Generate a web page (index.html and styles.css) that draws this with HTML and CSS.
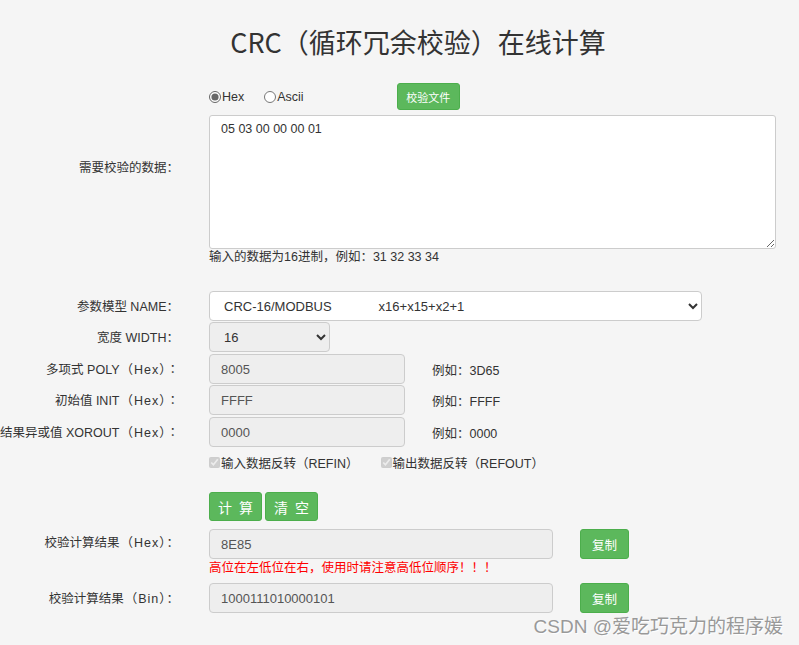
FILE: index.html
```html
<!DOCTYPE html>
<html lang="zh">
<head>
<meta charset="utf-8">
<title>CRC在线计算</title>
<link rel="stylesheet" href="styles.css">
</head>
<body>
<div class="page">
  <h1 class="title">CRC（循环冗余校验）在线计算</h1>

  <div class="row row-radio">
    <div class="label"></div>
    <div class="field radios">
      <label class="radio"><input type="radio" name="fmt" checked>Hex</label>
      <label class="radio radio-ascii"><input type="radio" name="fmt">Ascii</label>
      <button class="btn btn-file">校验文件</button>
    </div>
  </div>

  <div class="row row-data">
    <div class="label label-top">需要校验的数据<span class="colon">：</span></div>
    <div class="field">
      <textarea class="data">05 03 00 00 00 01</textarea>
      <div class="hint">输入的数据为16进制，例如：31 32 33 34</div>
    </div>
  </div>

  <div class="row row-name">
    <div class="label">参数模型 NAME<span class="colon">：</span></div>
    <div class="field">
      <select class="sel sel-name">
        <option>CRC-16/MODBUS&nbsp;&nbsp;&nbsp;&nbsp;&nbsp;&nbsp;&nbsp;&nbsp;&nbsp;&nbsp;&nbsp;&nbsp;&nbsp;x16+x15+x2+1</option>
      </select>
    </div>
  </div>

  <div class="row row-width">
    <div class="label">宽度 WIDTH<span class="colon">：</span></div>
    <div class="field">
      <select class="sel sel-width" disabled>
        <option>16</option>
      </select>
    </div>
  </div>

  <div class="row row-param row-poly">
    <div class="label">多项式 POLY<span class="paren">（Hex）</span><span class="colon">：</span></div>
    <div class="field inline">
      <input class="txt txt-param" type="text" value="8005" disabled>
      <span class="example">例如：3D65</span>
    </div>
  </div>

  <div class="row row-param row-init">
    <div class="label">初始值 INIT<span class="paren">（Hex）</span><span class="colon">：</span></div>
    <div class="field inline">
      <input class="txt txt-param" type="text" value="FFFF" disabled>
      <span class="example">例如：FFFF</span>
    </div>
  </div>

  <div class="row row-param row-xor">
    <div class="label">结果异或值 XOROUT<span class="paren">（Hex）</span><span class="colon">：</span></div>
    <div class="field inline">
      <input class="txt txt-param" type="text" value="0000" disabled>
      <span class="example">例如：0000</span>
    </div>
  </div>

  <div class="row row-check">
    <div class="label"></div>
    <div class="field inline">
      <label class="check"><input type="checkbox" checked disabled>输入数据反转（REFIN）</label>
      <label class="check check-out"><input type="checkbox" checked disabled>输出数据反转（REFOUT）</label>
    </div>
  </div>

  <div class="row row-actions">
    <div class="label"></div>
    <div class="field inline actions">
      <button class="btn btn-big">计 算</button>
      <button class="btn btn-big">清 空</button>
    </div>
  </div>

  <div class="row row-result">
    <div class="label">校验计算结果<span class="paren">（Hex）</span><span class="colon">：</span></div>
    <div class="field">
      <div class="inline">
        <input class="txt txt-result" type="text" value="8E85" readonly>
        <button class="btn btn-copy">复制</button>
      </div>
      <div class="warn">高位在左低位在右，使用时请注意高低位顺序！！！</div>
    </div>
  </div>

  <div class="row row-bin">
    <div class="label">校验计算结果<span class="paren">（Bin）</span><span class="colon">：</span></div>
    <div class="field inline">
      <input class="txt txt-result" type="text" value="1000111010000101" readonly>
      <button class="btn btn-copy">复制</button>
    </div>
  </div>

  <div class="watermark">CSDN @爱吃巧克力的程序媛</div>
</div>
</body>
</html>
```

FILE: styles.css
```css
* { box-sizing: border-box; }

html, body {
  margin: 0;
  padding: 0;
  background: #f5f5f5;
}

body {
  font-family: "Liberation Sans", "Noto Sans CJK SC", sans-serif;
  font-size: 12px;
  color: #333;
}

.page {
  position: relative;
  width: 799px;
  height: 645px;
  overflow: hidden;
}

.title {
  margin: 0;
  padding-top: 22px;
  padding-left: 37px;
  height: 80px;
  line-height: 40px;
  text-align: center;
  font-family: "Noto Sans CJK SC", "Liberation Sans", sans-serif;
  font-weight: 400;
  font-size: 27px;
  color: #333;
}

.row {
  display: grid;
  grid-template-columns: 179px 1fr;
  column-gap: 30px;
  align-items: center;
}

.label {
  text-align: right;
  white-space: nowrap;
  font-size: 12.5px;
  margin-top: -2px;
}

.paren {
  letter-spacing: 1px;
  padding-left: 1px;
}

.colon {
  font-family: "Noto Sans CJK TC", "Noto Sans CJK SC", sans-serif;
}

.label-top {
  align-self: start;
  padding-top: 42px;
  margin-top: 0;
}

.field { min-width: 0; }

.inline {
  display: flex;
  align-items: center;
}

/* radio row */
.row-radio { margin-top: 3px; height: 27px; }

.radios { display: flex; align-items: center; }

.radio {
  display: inline-flex;
  align-items: center;
  font-size: 12.5px;
}

.radio input {
  margin: 0 1px 0 0;
  width: 12px;
  height: 12px;
  accent-color: #666;
}

.radio-ascii { margin-left: 20px; }

.btn {
  font-family: "Noto Sans CJK SC", "Liberation Sans", sans-serif;
  background: #5cb85c;
  border: 1px solid #4cae4c;
  color: #fff;
  border-radius: 3px;
  padding: 0;
  cursor: pointer;
}

.btn-file {
  margin-left: 93px;
  width: 63px;
  height: 27px;
  font-size: 11px;
}

/* data */
.row-data { margin-top: 5px; }

.data {
  display: block;
  width: 567px;
  height: 134px;
  border: 1px solid #ccc;
  border-radius: 3px;
  background: #fff;
  padding: 6px 11px;
  font-family: "Liberation Sans", "Noto Sans CJK SC", sans-serif;
  font-size: 12.5px;
  color: #333;
  resize: vertical;
  margin: 0;
}

.hint {
  line-height: 16px;
  font-size: 12.5px;
}

/* selects */
.row-name { margin-top: 26px; height: 30px; }

.sel {
  display: block;
  height: 30px;
  border: 1px solid #ccc;
  border-radius: 4px;
  font-family: "Liberation Sans", "Noto Sans CJK SC", sans-serif;
  font-size: 13px;
  color: #333;
  padding: 0 10px;
  margin: 0;
  opacity: 1;
}

.sel-name { width: 493px; background: #fff; }

.row-width { margin-top: 1px; height: 30px; }

.sel-width {
  width: 121px;
  height: 30px;
  background: #eee;
  color: #333;
}

.row-param { height: 30px; }
.row-poly { margin-top: 2px; }
.row-init { margin-top: 1px; }
.row-xor { margin-top: 2px; }

.txt {
  display: block;
  height: 30px;
  border: 1px solid #ccc;
  border-radius: 4px;
  background: #eee;
  padding: 0 11px;
  font-family: "Liberation Sans", "Noto Sans CJK SC", sans-serif;
  font-size: 13px;
  color: #555;
  margin: 0;
  outline: none;
}

.txt-param { width: 196px; }

.example {
  margin-left: 27px;
  font-size: 12.5px;
}

/* checkboxes */
.row-check { margin-top: 6px; height: 18px; }

.check {
  display: inline-flex;
  align-items: center;
  font-size: 12.5px;
  color: #333;
}

.check input {
  margin: 0 1px 0 0;
  width: 11px;
  height: 11px;
}

.check-out { margin-left: 22px; }

/* actions */
.row-actions { margin-top: 21px; height: 29px; }

.actions { gap: 3px; }

.btn-big {
  width: 53px;
  height: 29px;
  font-size: 14px;
  letter-spacing: 2px;
  padding-left: 2px;
}

/* results */
.row-result { margin-top: 8px; align-items: start; }

.row-result .label { line-height: 30px; }

.txt-result {
  width: 344px;
  height: 30px;
}

.btn-copy {
  margin-left: 27px;
  width: 49px;
  height: 30px;
  font-size: 12.5px;
}

.warn {
  color: #f00;
  font-size: 12.5px;
  line-height: 18px;
}

.row-bin { margin-top: 6px; height: 30px; }

/* watermark overlay */
.watermark {
  position: absolute;
  right: 16px;
  top: 611px;
  font-family: "Liberation Sans", "Noto Sans CJK SC", sans-serif;
  font-size: 19px;
  color: #999;
  text-shadow: 1px 1px 1px #fff;
  white-space: nowrap;
}
```
